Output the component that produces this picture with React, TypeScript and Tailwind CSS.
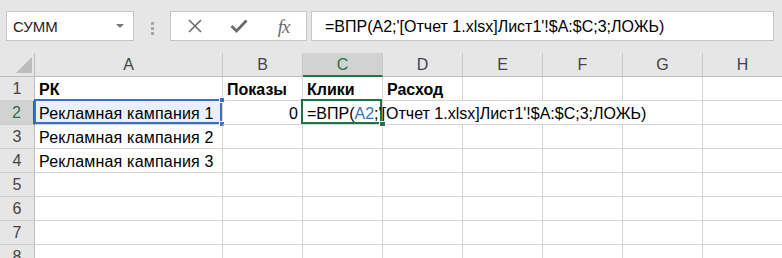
import React from "react";

const COLS = [
  { l: "A", w: "w-[188px]" },
  { l: "B", w: "w-[80px]" },
  { l: "C", w: "w-[80px]" },
  { l: "D", w: "w-[80px]" },
  { l: "E", w: "w-[80px]" },
  { l: "F", w: "w-[80px]" },
  { l: "G", w: "w-[80px]" },
  { l: "H", w: "w-[80px]" },
];

const FORMULA = "=ВПР(A2;'[Отчет 1.xlsx]Лист1'!$A:$C;3;ЛОЖЬ)";

function RowHeader({ n, selected }: { n: number; selected?: boolean }) {
  return (
    <div
      className={
        "w-[35px] shrink-0 h-full flex items-center justify-center border-b border-[#cfcfcf] " +
        (selected
          ? "bg-[#d2d2d2] text-[#217346] border-r-2 border-r-[#217346]"
          : "bg-[#e6e6e6] text-[#444] border-r border-r-[#bdbdbd]")
      }
    >
      <span className="pt-[1px]">{n}</span>
    </div>
  );
}

function Cell({
  w,
  children,
  noRight,
  className = "",
}: {
  w: string;
  children?: React.ReactNode;
  noRight?: boolean;
  className?: string;
}) {
  return (
    <div
      className={
        w +
        " shrink-0 h-full relative flex items-center border-b border-[#d4d4d4] whitespace-nowrap " +
        (noRight ? "" : "border-r ") +
        className
      }
    >
      {children}
    </div>
  );
}

export default function App() {
  const rows = [3, 4, 5, 6, 7, 8];
  const texts: Record<number, string> = { 3: "Рекламная кампания 2", 4: "Рекламная кампания 3" };
  return (
    <div className="w-[782px] h-[258px] overflow-hidden bg-[#e6e6e6] font-['Liberation_Sans',Arial,sans-serif] text-[16px] text-black leading-none">
      {/* Formula bar */}
      <div className="h-[53px] flex items-start pt-[11px] pl-[6px]">
        <div className="w-[128px] h-[30px] bg-white border border-[#c6c6c6] flex items-center justify-between pl-[6px] pr-[9px]">
          <span className="text-[15px] text-[#222] pt-[1px]">СУММ</span>
          <svg width="8" height="4" viewBox="0 0 8 4">
            <path d="M0 0 L8 0 L4 4 Z" fill="#7a7a7a" />
          </svg>
        </div>
        <div className="w-[36px] h-[30px] flex flex-col items-center justify-center gap-[2px] pt-[4px]">
          <div className="w-[3px] h-[3px] bg-[#a6a6a6]" />
          <div className="w-[3px] h-[3px] bg-[#a6a6a6]" />
          <div className="w-[3px] h-[3px] bg-[#a6a6a6]" />
        </div>
        <div className="w-[137px] h-[30px] bg-white border border-[#c6c6c6] flex items-center">
          <div className="w-[45px] flex justify-center pl-[2px]">
            <svg width="16" height="16" viewBox="0 0 16 16">
              <path d="M2 2 L14 14 M14 2 L2 14" stroke="#6b6b6b" strokeWidth="1.6" />
            </svg>
          </div>
          <div className="w-[45px] flex justify-center">
            <svg width="18" height="14" viewBox="0 0 18 14">
              <path d="M1.5 7 L6.5 12 L16.5 1.5" stroke="#6b6b6b" strokeWidth="2.8" fill="none" />
            </svg>
          </div>
          <div className="w-[45px] flex justify-center">
            <span className="font-['Liberation_Serif',serif] italic text-[19px] text-[#6b6b6b] tracking-[-1px]">
              fx
            </span>
          </div>
        </div>
        <div className="ml-[4px] w-[463px] h-[30px] bg-white border border-[#c6c6c6] flex items-center pl-[13px]">
          <span className="whitespace-nowrap pt-[1px]">{FORMULA}</span>
        </div>
      </div>

      {/* Grid */}
      <div className="bg-white">
        {/* Column headers */}
        <div className="flex h-[24px] bg-[#e6e6e6] text-[#444]">
          <div className="w-[35px] shrink-0 h-full border-r border-b border-[#bdbdbd] flex items-end justify-end pr-[2px] pb-[3px]">
            <svg width="16" height="16" viewBox="0 0 16 16">
              <path d="M16 0 L16 16 L0 16 Z" fill="#bcbcbc" />
            </svg>
          </div>
          {COLS.map((c) => (
            <div
              key={c.l}
              className={
                c.w +
                " shrink-0 h-full flex items-center justify-center border-r border-[#c8c8c8] " +
                (c.l === "C"
                  ? "bg-[#d2d2d2] text-[#217346] border-b-2 border-b-[#217346]"
                  : "border-b border-b-[#bdbdbd]")
              }
            >
              <span className="pt-[1px]">{c.l}</span>
            </div>
          ))}
        </div>

        {/* Row 1 */}
        <div className="flex h-[24px]">
          <RowHeader n={1} />
          <Cell w="w-[188px]" className="pl-[4px] font-bold pt-[2px]">РК</Cell>
          <Cell w="w-[80px]" className="pl-[4px] font-bold pt-[2px]">Показы</Cell>
          <Cell w="w-[80px]" className="pl-[4px] font-bold pt-[2px]">Клики</Cell>
          <Cell w="w-[80px]" className="pl-[4px] font-bold pt-[2px]">Расход</Cell>
          <Cell w="w-[80px]" />
          <Cell w="w-[80px]" />
          <Cell w="w-[80px]" />
          <Cell w="w-[80px]" />
        </div>

        {/* Row 2 */}
        <div className="flex h-[24px]">
          <RowHeader n={2} selected />
          <Cell w="w-[188px]" className="pl-[4px] pt-[2px] bg-[#e9f0fa]">
            <div className="absolute -left-[1px] -top-[2px] right-0 bottom-0 border-2 border-[#3a6fc8] pointer-events-none" />
            <span className="relative tracking-[0.2px]">Рекламная кампания 1</span>
            <div className="absolute -right-[3px] -top-[4px] w-[6px] h-[6px] bg-[#3a6fc8] border border-white" />
            <div className="absolute -right-[3px] -bottom-[3px] w-[6px] h-[6px] bg-[#3a6fc8] border border-white" />
          </Cell>
          <Cell w="w-[80px]" className="justify-end pr-[4px] pt-[2px]">
            0
          </Cell>
          <Cell w="w-[80px]" className="pl-[4px] pt-[2px] z-10">
            <div className="absolute -left-[2px] -top-[2px] right-0 bottom-0 border-2 border-[#217346] pointer-events-none" />
            <span className="relative">
              =ВПР(<span className="text-[#3a6fc8]">A2</span>;'[Отчет 1.xlsx]Лист1'!$A:$C;3;ЛОЖЬ)
            </span>
            <div className="absolute -right-[4px] -bottom-[3px] w-[7px] h-[6px] bg-[#217346] border border-white" />
          </Cell>
          <Cell w="w-[80px]" noRight />
          <Cell w="w-[80px]" noRight />
          <Cell w="w-[80px]" noRight />
          <Cell w="w-[80px]" />
          <Cell w="w-[80px]" />
        </div>

        {rows.map((r) => (
          <div key={r} className="flex h-[24px]">
            <RowHeader n={r} />
            <Cell w="w-[188px]" className="pl-[4px] pt-[2px]">
              <span className="tracking-[0.2px]">{texts[r] ?? ""}</span>
            </Cell>
            <Cell w="w-[80px]" />
            <Cell w="w-[80px]" />
            <Cell w="w-[80px]" />
            <Cell w="w-[80px]" />
            <Cell w="w-[80px]" />
            <Cell w="w-[80px]" />
            <Cell w="w-[80px]" />
          </div>
        ))}
      </div>
    </div>
  );
}
